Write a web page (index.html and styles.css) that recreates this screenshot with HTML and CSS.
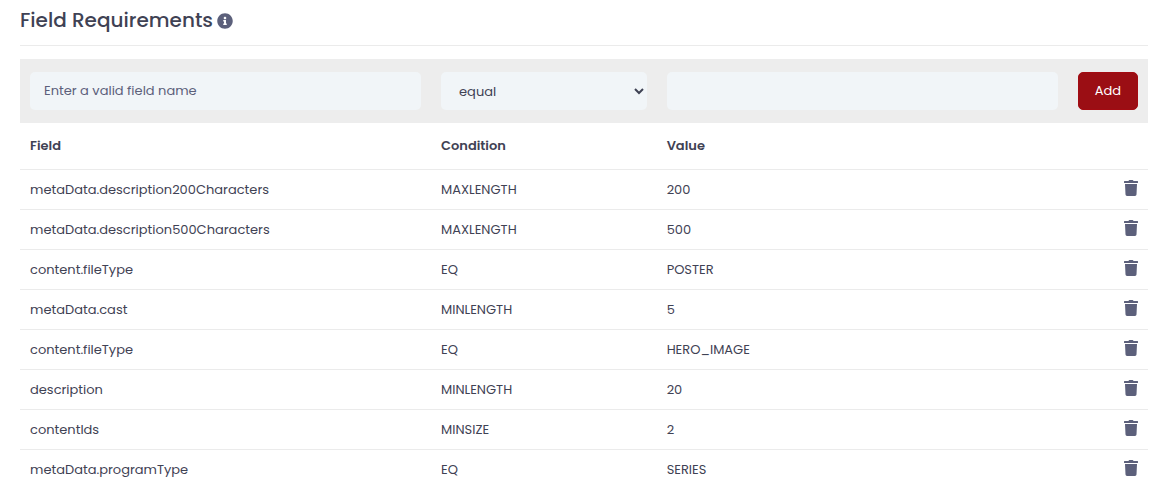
FILE: index.html
```html
<!DOCTYPE html>
<html lang="en">
<head>
<meta charset="utf-8">
<meta name="viewport" content="width=device-width, initial-scale=1">
<title>Field Requirements</title>
<link rel="stylesheet" href="styles.css">
</head>
<body>
<svg class="sprite" aria-hidden="true">
  <symbol id="trash" viewBox="0 0 14 16">
    <path d="M.5 1H4.500l.4-.7Q5.100 0 5.500 0h3q.4 0 .6.300L9.500 1h4q.5 0 .5.500v1q0 .5-.5.500H.5Q0 3 0 2.500v-1Q0 1 .5 1ZM1 4h12l-.5 10.600q-.1 1.400-1.500 1.400H3q-1.400 0-1.500-1.400Z"/>
  </symbol>
</svg>
<main class="panel">
  <header class="panel-header">
    <h1 class="panel-title">Field Requirements</h1>
    <svg class="info-icon" viewBox="0 0 512 512" role="img" aria-label="Information"><path d="M256 8C119 8 8 119 8 256s111 248 248 248 248-111 248-248S393 8 256 8zm0 110c23 0 42 19 42 42s-19 42-42 42-42-19-42-42 19-42 42-42zm56 254c0 7-5 12-12 12h-88c-7 0-12-5-12-12v-24c0-7 5-12 12-12h12v-64h-12c-7 0-12-5-12-12v-24c0-7 5-12 12-12h64c7 0 12 5 12 12v100h12c7 0 12 5 12 12v24z"/></svg>
  </header>
  <form>
    <table class="rules">
      <colgroup><col class="col-wide"><col class="col-condition"><col class="col-wide"><col class="col-action"></colgroup>
      <thead>
        <tr class="entry-row">
          <td><input class="control" type="text" placeholder="Enter a valid field name" aria-label="Field name"></td>
          <td><select class="control" aria-label="Condition"><option>equal</option></select></td>
          <td><input class="control" type="text" aria-label="Value"></td>
          <td><button class="add-button" type="button">Add</button></td>
        </tr>
        <tr class="heading-row"><th scope="col">Field</th><th scope="col">Condition</th><th scope="col">Value</th><td></td></tr>
      </thead>
      <tbody>
        <tr><td>metaData.description200Characters</td><td>MAXLENGTH</td><td>200</td><td><button class="delete-button" type="button" aria-label="Delete"><svg class="trash-icon"><use href="#trash"/></svg></button></td></tr>
        <tr><td>metaData.description500Characters</td><td>MAXLENGTH</td><td>500</td><td><button class="delete-button" type="button" aria-label="Delete"><svg class="trash-icon"><use href="#trash"/></svg></button></td></tr>
        <tr><td>content.fileType</td><td>EQ</td><td>POSTER</td><td><button class="delete-button" type="button" aria-label="Delete"><svg class="trash-icon"><use href="#trash"/></svg></button></td></tr>
        <tr><td>metaData.cast</td><td>MINLENGTH</td><td>5</td><td><button class="delete-button" type="button" aria-label="Delete"><svg class="trash-icon"><use href="#trash"/></svg></button></td></tr>
        <tr><td>content.fileType</td><td>EQ</td><td>HERO_IMAGE</td><td><button class="delete-button" type="button" aria-label="Delete"><svg class="trash-icon"><use href="#trash"/></svg></button></td></tr>
        <tr><td>description</td><td>MINLENGTH</td><td>20</td><td><button class="delete-button" type="button" aria-label="Delete"><svg class="trash-icon"><use href="#trash"/></svg></button></td></tr>
        <tr><td>contentIds</td><td>MINSIZE</td><td>2</td><td><button class="delete-button" type="button" aria-label="Delete"><svg class="trash-icon"><use href="#trash"/></svg></button></td></tr>
        <tr><td>metaData.programType</td><td>EQ</td><td>SERIES</td><td><button class="delete-button" type="button" aria-label="Delete"><svg class="trash-icon"><use href="#trash"/></svg></button></td></tr>
      </tbody>
    </table>
  </form>
</main>
</body>
</html>
```

FILE: styles.css
```css
* { box-sizing: border-box; }

body {
  margin: 0;
  background: #fff;
  color: #3f4254;
  font: 13px/20px Poppins, Inter, sans-serif;
}

.sprite { display: none; }

.panel { padding: 0 26px 0 20px; }

.panel-header {
  display: flex;
  align-items: center;
  gap: 4px;
  padding: 7px 0 10px;
  margin-bottom: 13px;
  border-bottom: 1px solid #ebebeb;
}

.panel-title {
  margin: 0;
  padding-bottom: 2px;
  font-size: 20px;
  font-weight: 500;
  line-height: 26px;
}

.info-icon {
  width: 16px;
  height: 16px;
  fill: #5c607b;
}

.rules {
  width: 100%;
  border-collapse: separate;
  border-spacing: 0;
  table-layout: fixed;
}

.col-wide { width: 36.44%; }
.col-condition { width: 20%; }

.rules td,
.rules th {
  padding: 0 10px;
  text-align: left;
  vertical-align: middle;
}

.rules .entry-row td {
  padding: 13px 10px;
  background: #ededed;
}

.heading-row th,
.heading-row td {
  height: 47px;
  border-bottom: 1px solid #ebebeb;
}

.heading-row th {
  font-size: 13px;
  font-weight: 600;
}

.rules tbody td {
  height: 40px;
  border-bottom: 1px solid #ebebeb;
}

.rules tbody tr:last-child td { border-bottom-color: transparent; }

.control {
  display: block;
  width: 100%;
  height: 38px;
  padding: 0 14px;
  border: 0;
  border-radius: 5px;
  background-color: #f1f5f8;
  color: #3f4254;
  font: inherit;
}

select.control { padding-right: 0; }

.control::placeholder {
  color: #5c607b;
  opacity: 1;
}

.add-button {
  display: block;
  width: 100%;
  height: 38px;
  padding: 0;
  border: 1px solid #a30b12;
  border-radius: 5px;
  background: #9b0e14;
  color: #fff;
  font: inherit;
}

.delete-button {
  display: block;
  margin-left: auto;
  padding: 0 0 4px;
  border: 0;
  background: none;
}

.trash-icon {
  display: block;
  width: 14px;
  height: 16px;
  fill: #5c607b;
}
```
